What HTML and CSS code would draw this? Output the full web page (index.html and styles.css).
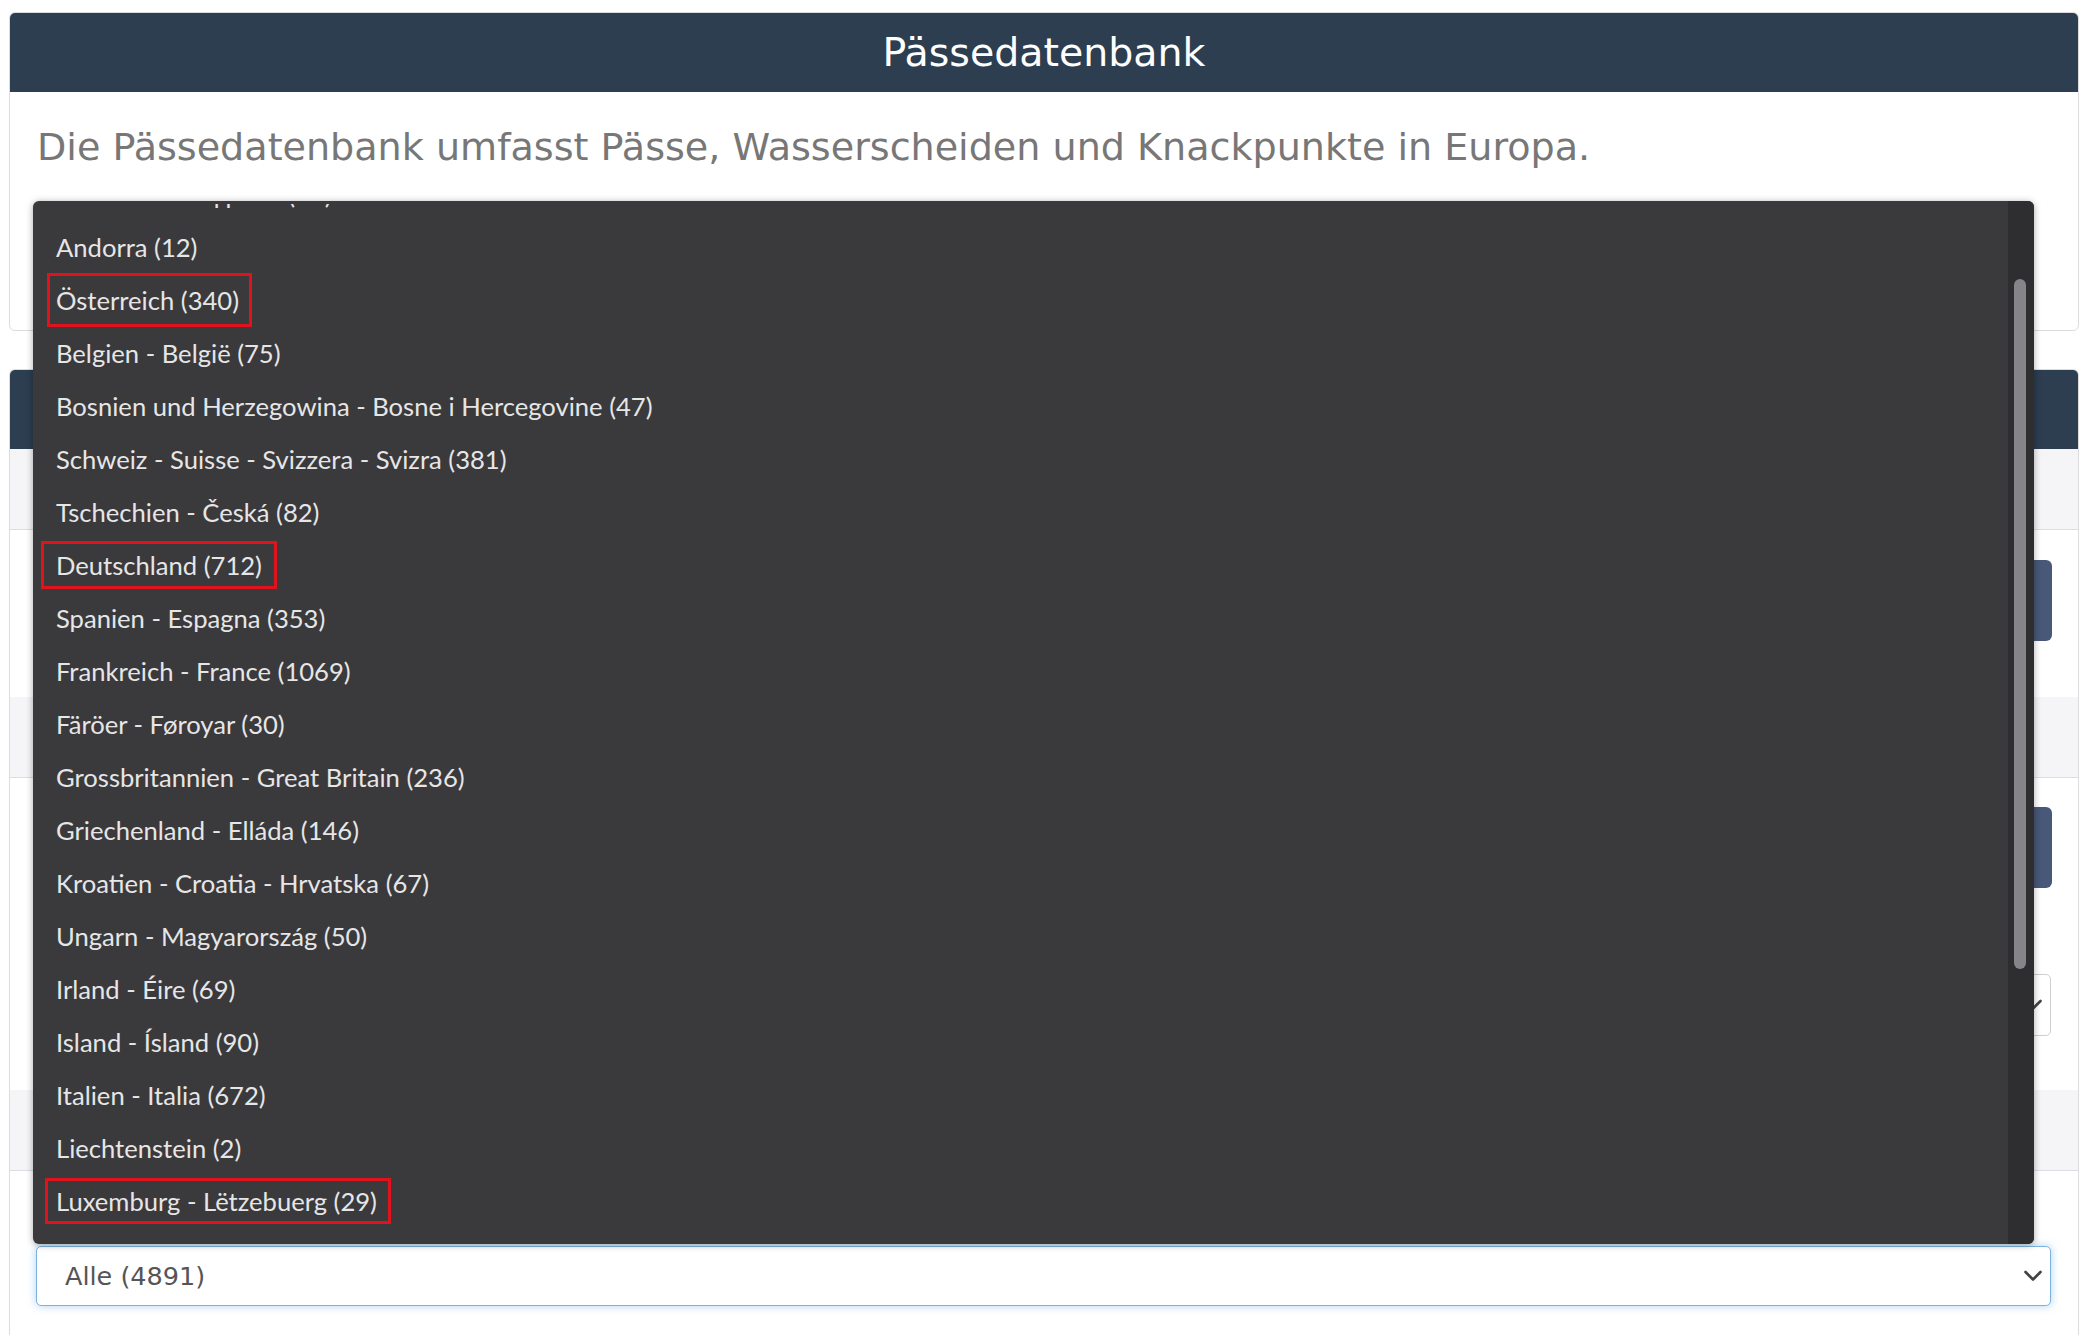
FILE: index.html
```html
<!DOCTYPE html>
<html lang="de">
<head>
<meta charset="utf-8">
<title>Pässedatenbank</title>
<link rel="stylesheet" href="styles.css">
</head>
<body>
<div class="page">
  <section class="card intro">
    <header class="card-head">
      <h1 class="title">Pässedatenbank</h1>
    </header>
    <div class="intro-body">
      <p class="lead">Die Pässedatenbank umfasst Pässe, Wasserscheiden und Knackpunkte in Europa.</p>
    </div>
  </section>

  <section class="card search">
    <div class="card-head"></div>
    <div class="band"></div>
    <div class="block b1"><div class="btn"></div></div>
    <div class="band"></div>
    <div class="block b2">
      <div class="btn"></div>
      <div class="select plain">
        <span></span>
        <svg class="chev" viewBox="0 0 18 12" width="18" height="12"><path d="M1.5 2 L9 9.5 L16.5 2"/></svg>
      </div>
    </div>
    <div class="band"></div>
    <div class="block b3">
      <div class="select focus">
        <span>Alle (4891)</span>
        <svg class="chev" viewBox="0 0 18 12" width="18" height="12"><path d="M1.5 2 L9 9.5 L16.5 2"/></svg>
      </div>
    </div>
  </section>

  <div class="dropdown">
    <div class="viewport">
      <ul class="options">
        <li>Albanien - Shqipëria (31)</li>
        <li>Andorra (12)</li>
        <li><span class="hl hl-at">Österreich (340)</span></li>
        <li>Belgien - België (75)</li>
        <li>Bosnien und Herzegowina - Bosne i Hercegovine (47)</li>
        <li>Schweiz - Suisse - Svizzera - Svizra (381)</li>
        <li>Tschechien - Česká (82)</li>
        <li><span class="hl hl-de">Deutschland (712)</span></li>
        <li>Spanien - Espagna (353)</li>
        <li>Frankreich - France (1069)</li>
        <li>Färöer - Føroyar (30)</li>
        <li>Grossbritannien - Great Britain (236)</li>
        <li>Griechenland - Elláda (146)</li>
        <li>Kroatien - Croatia - Hrvatska (67)</li>
        <li>Ungarn - Magyarország (50)</li>
        <li>Irland - Éire (69)</li>
        <li>Island - Ísland (90)</li>
        <li>Italien - Italia (672)</li>
        <li>Liechtenstein (2)</li>
        <li><span class="hl hl-lu">Luxemburg - Lëtzebuerg (29)</span></li>
        <li>Montenegro - Crna Gora (24)</li>
      </ul>
    </div>
    <div class="track"><div class="thumb"></div></div>
  </div>
</div>
</body>
</html>
```

FILE: styles.css
```css
html, body {
  margin: 0;
  padding: 0;
  background: #ffffff;
  overflow: hidden;
  height: 1335px;
}

body {
  font-family: "DejaVu Sans", sans-serif;
}

.page {
  position: relative;
  padding: 12px 12px 0 9px;
}

.card {
  border: 1px solid #dcdcdf;
  border-radius: 6px;
  overflow: hidden;
  background: #ffffff;
}

.card-head {
  background: #2c3e50;
  height: 79px;
}

.title {
  margin: 0;
  color: #ffffff;
  font-weight: normal;
  font-size: 39.5px;
  line-height: 79px;
  text-align: center;
}

.intro-body {
  box-sizing: border-box;
  height: 238px;
  padding: 28px 27px 0;
}

.lead {
  margin: 0;
  color: #777777;
  font-size: 38.1px;
  line-height: 54px;
  white-space: nowrap;
}

.search {
  margin-top: 38px;
  border-bottom: none;
  border-radius: 6px 6px 0 0;
  height: 1100px;
}

.band {
  background: #f5f5f8;
  height: 80px;
  border-bottom: 1px solid #dedee2;
}

.block {
  padding: 0 26px;
  display: flex;
  flex-direction: column;
}

.b1 {
  padding-top: 30px;
  padding-bottom: 56px;
}

.b2 {
  padding-top: 29px;
  padding-bottom: 54px;
  gap: 86px;
}

.b3 {
  padding-top: 75px;
}

.btn {
  height: 81px;
  background: #485878;
  border-radius: 6px;
}

.select {
  box-sizing: border-box;
  display: flex;
  align-items: center;
  justify-content: space-between;
  background: #ffffff;
  border-radius: 5px;
  padding: 0 8px 0 28px;
  font-size: 25.5px;
  color: #555555;
  margin-right: 1px;
}

.select.plain {
  height: 62px;
  border: 1px solid #cfcfd4;
}

.select.focus {
  height: 60px;
  border: 1px solid #7db2de;
  box-shadow: 0 0 9px rgba(102, 175, 233, 0.55);
}

.chev path {
  fill: none;
  stroke: #444444;
  stroke-width: 2.6;
  stroke-linecap: round;
  stroke-linejoin: round;
}

.dropdown {
  position: absolute;
  left: 33px;
  top: 201px;
  width: 2001px;
  height: 1043px;
  display: flex;
  background: #3a393c;
  border-radius: 6px;
  box-shadow: 0 1px 7px rgba(0, 0, 0, 0.35);
  overflow: hidden;
}

.viewport {
  flex: 1;
  height: 1023px;
  margin-top: 3px;
  overflow: hidden;
}

.options {
  list-style: none;
  margin: -37px 0 0;
  padding: 0;
}

.options li {
  height: 53px;
  display: flex;
  align-items: center;
  padding-left: 23px;
  font-family: Lato, "DejaVu Sans", sans-serif;
  font-size: 25.6px;
  color: #e6e6e6;
  white-space: nowrap;
}

.hl {
  display: inline-block;
  border: 3px solid #e0121b;
  box-sizing: border-box;
}

.hl-at {
  height: 54px;
  line-height: 48px;
  margin-left: -9px;
  padding: 0 10px 0 6px;
}

.hl-de {
  height: 48px;
  line-height: 42px;
  margin-left: -15px;
  padding: 0 12px 0 12px;
}

.hl-lu {
  height: 46px;
  line-height: 40px;
  margin-left: -11px;
  padding: 0 11px 0 8px;
}

.track {
  width: 26px;
  background: #2e2d30;
  flex-shrink: 0;
}

.thumb {
  margin: 78px 0 0 6px;
  width: 12px;
  height: 690px;
  border-radius: 6px;
  background: #858488;
}
```
